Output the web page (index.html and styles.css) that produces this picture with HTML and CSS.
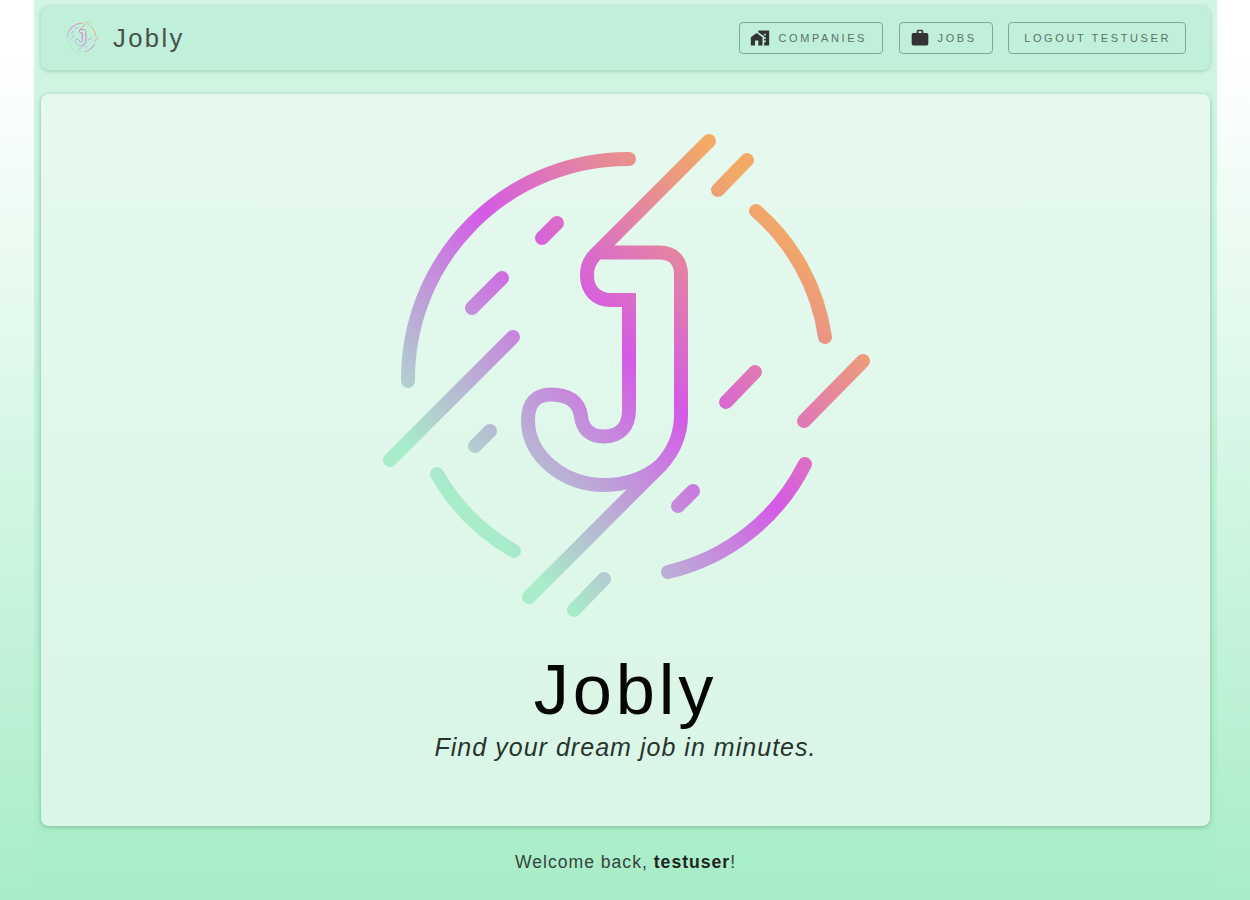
FILE: index.html
```html
<!DOCTYPE html>
<html lang="en">
<head>
<meta charset="utf-8">
<title>Jobly</title>
<link rel="stylesheet" href="styles.css">
</head>
<body>
<div class="page">
  <nav class="navbar">
    <a class="brand">
      <svg class="brand-logo" viewBox="380 130 490 490" aria-hidden="true"><use href="#logo-art"/></svg>
      <span class="brand-name">Jobly</span>
    </a>
    <div class="nav-links">
      <a class="nav-btn">
        <svg class="nav-icon" viewBox="0 0 24 24" aria-hidden="true"><path d="M1 11v10h5v-6h4v6h5V11L8 6z"/><path d="M10 3v1.97l7 5V11h2v2h-2v2h2v2h-2v4h6V3H10zm9 6h-2V7h2v2z"/></svg>
        <span>Companies</span>
      </a>
      <a class="nav-btn">
        <svg class="nav-icon" viewBox="0 0 24 24" aria-hidden="true"><path d="M20 6h-4V4c0-1.11-.89-2-2-2h-4c-1.11 0-2 .89-2 2v2H4c-1.11 0-1.99.89-1.99 2L2 19c0 1.11.89 2 2 2h16c1.11 0 2-.89 2-2V8c0-1.11-.89-2-2-2zm-6 0h-4V4h4v2z"/></svg>
        <span>Jobs</span>
      </a>
      <a class="nav-btn nav-btn-plain"><span>Logout testuser</span></a>
    </div>
  </nav>
  <main class="hero-card">
    <svg class="hero-logo" viewBox="380 130 490 490" aria-hidden="true">
      <defs>
        <linearGradient id="logo-grad" gradientUnits="userSpaceOnUse" x1="480" y1="520" x2="780" y2="220">
          <stop offset="0" stop-color="#a8ecc9"/>
          <stop offset="0.517" stop-color="#d45ae6"/>
          <stop offset="1" stop-color="#f2aa64"/>
        </linearGradient>
      </defs>
      <g id="logo-art" fill="none" stroke="url(#logo-grad)" stroke-width="14" stroke-linecap="round" stroke-linejoin="miter">
        <path d="M628 159 A220 220 0 0 0 407 381"/>
        <path d="M755 211 A205 205 0 0 1 824 337"/>
        <path d="M804 464 A205 205 0 0 1 667 572"/>
        <path d="M436 474 A205 205 0 0 0 513 551"/>
        <path d="M708 141 L594 255 C589 260 586 267 586 275 C586 290 595 300 610 300 L628 300 L628 410 C628 427 618 436.500 603 436.500 C588 436.500 581 428 580 416 C578 402 568 394.500 550 394.500 C535 394.500 527 403 527 420 C527 458 565 485 603 485 C625 485 645 478 660 465 C671 453 680 438 680 415 L680 275 C680 260 672 252.500 658 252.500 L602 252.500"/>
        <path d="M660 465 L528 597"/>
        <path d="M746 160 L717 190"/>
        <path d="M754 372 L725 402"/>
        <path d="M862 361 L803 421"/>
        <path d="M692 491 L677 506"/>
        <path d="M556 223 L541 238"/>
        <path d="M501 278 L471 308"/>
        <path d="M512 337 L389 460"/>
        <path d="M489 431 L474 446"/>
        <path d="M603 579 L573 610"/>
      </g>
    </svg>
    <h1 class="hero-title">Jobly</h1>
    <p class="hero-tagline">Find your dream job in minutes.</p>
  </main>
  <p class="welcome">Welcome back, <strong>testuser</strong>!</p>
</div>
</body>
</html>
```

FILE: styles.css
```css
* { box-sizing: border-box; }

html, body { margin: 0; height: 100%; }

body {
  background: linear-gradient(180deg, #ffffff 6%, #a8edc8 100%);
  font-family: "Liberation Sans", Arial, sans-serif;
  overflow: hidden;
}

.page {
  width: 1183px;
  height: 900px;
  margin-left: 34px;
  padding: 6px 7px 0;
  background: linear-gradient(180deg, #d3f6e4 0%, #a8edc8 100%);
}

.navbar {
  height: 64px;
  display: flex;
  align-items: center;
  justify-content: space-between;
  padding: 0 24px;
  background: #c0f0d9;
  border-radius: 8px;
  box-shadow: 0 1px 4px rgba(60, 120, 90, 0.35);
}

.brand { display: flex; align-items: center; gap: 14px; }

.brand-logo { width: 34px; height: 34px; display: block; opacity: 0.85; }

.brand-name {
  font-size: 25.6px;
  letter-spacing: 2.4px;
  color: #4a4f4c;
}

.nav-links { display: flex; gap: 15.5px; }

.nav-btn {
  height: 32px;
  display: flex;
  align-items: center;
  gap: 8px;
  padding: 0 15px 0 10px;
  border: 1px solid #7fa896;
  border-radius: 4px;
  font-size: 11px;
  letter-spacing: 2.6px;
  text-transform: uppercase;
  color: #5e7068;
}

.nav-btn-plain { padding: 0 14px 0 15px; }

.nav-icon { width: 20px; height: 20px; fill: #333; display: block; }

.hero-card {
  height: 732px;
  margin-top: 24px;
  padding-top: 36px;
  display: flex;
  flex-direction: column;
  align-items: center;
  background: linear-gradient(180deg, #e6f9ef 0%, #d9f6e6 100%);
  border-radius: 8px;
  box-shadow: 0 1px 4px rgba(60, 120, 90, 0.45);
}

.hero-logo { width: 490px; height: 490px; display: block; flex: none; }

.hero-title {
  margin: 26px 0 0;
  font-size: 70.4px;
  line-height: 88px;
  font-weight: 400;
  letter-spacing: 3.8px;
  color: #050505;
}

.hero-tagline {
  margin: -1px 0 0;
  font-size: 25px;
  line-height: 29px;
  font-style: italic;
  letter-spacing: 1.03px;
  color: #28332e;
}

.welcome {
  margin: 25px 0 0;
  text-align: center;
  font-size: 17.6px;
  line-height: 22px;
  letter-spacing: 1px;
  color: #37433d;
}

.welcome strong { color: #1f2522; }
```
